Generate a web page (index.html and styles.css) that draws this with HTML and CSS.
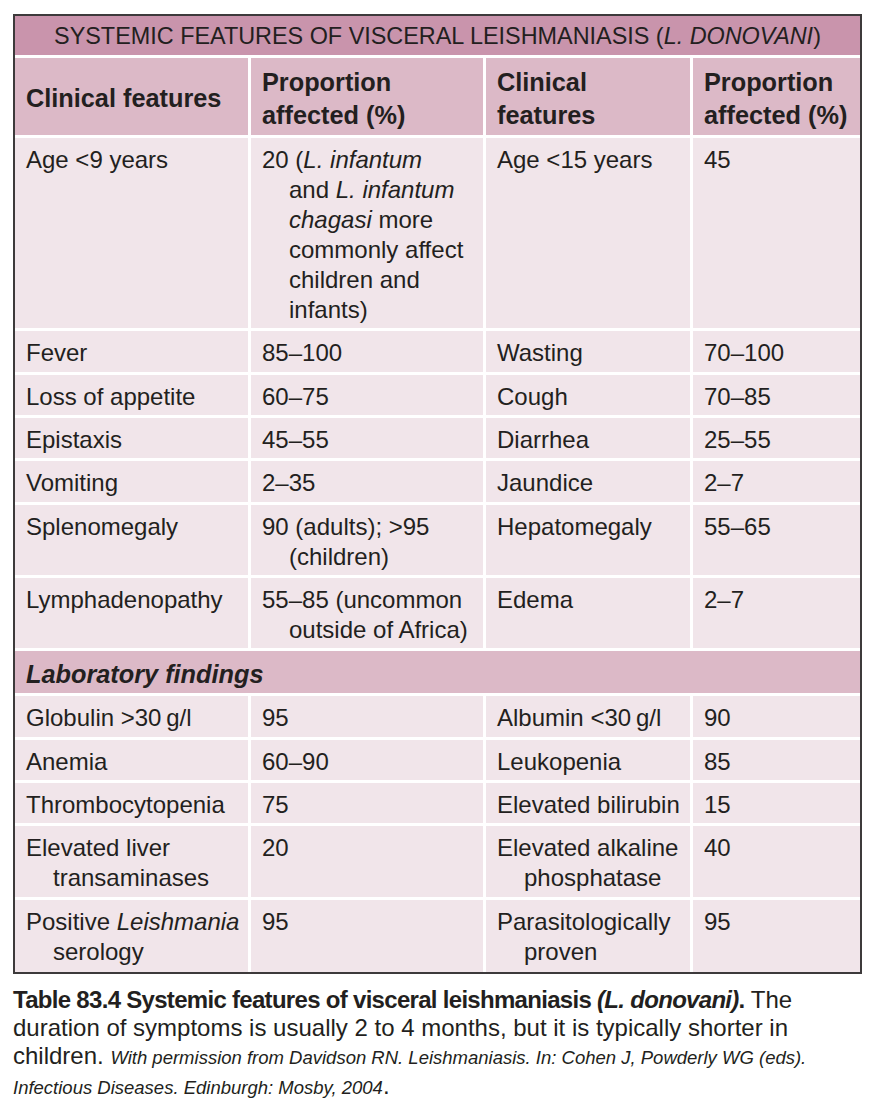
FILE: index.html
```html
<!DOCTYPE html>
<html lang="en">
<head>
<meta charset="utf-8">
<title>Systemic features of visceral leishmaniasis</title>
<link rel="stylesheet" href="styles.css">
</head>
<body>
<div class="page">
  <div class="table">
    <div class="title">SYSTEMIC FEATURES OF VISCERAL LEISHMANIASIS (<i>L. DONOVANI</i>)</div>

    <div class="th">Clinical features</div>
    <div class="th">Proportion<br>affected (%)</div>
    <div class="th">Clinical<br>features</div>
    <div class="th">Proportion<br>affected (%)</div>

    <div class="td">Age &lt;9 years</div>
    <div class="td">20 (<i>L. infantum</i><br>and <i>L. infantum</i><br><i>chagasi</i> more<br>commonly affect<br>children and<br>infants)</div>
    <div class="td">Age &lt;15 years</div>
    <div class="td">45</div>

    <div class="td">Fever</div>
    <div class="td">85–100</div>
    <div class="td">Wasting</div>
    <div class="td">70–100</div>

    <div class="td">Loss of appetite</div>
    <div class="td">60–75</div>
    <div class="td">Cough</div>
    <div class="td">70–85</div>

    <div class="td">Epistaxis</div>
    <div class="td">45–55</div>
    <div class="td">Diarrhea</div>
    <div class="td">25–55</div>

    <div class="td">Vomiting</div>
    <div class="td">2–35</div>
    <div class="td">Jaundice</div>
    <div class="td">2–7</div>

    <div class="td">Splenomegaly</div>
    <div class="td">90 (adults); &gt;95<br>(children)</div>
    <div class="td">Hepatomegaly</div>
    <div class="td">55–65</div>

    <div class="td">Lymphadenopathy</div>
    <div class="td">55–85 (uncommon<br>outside of Africa)</div>
    <div class="td">Edema</div>
    <div class="td">2–7</div>

    <div class="section">Laboratory findings</div>

    <div class="td">Globulin &gt;30&#8201;g/l</div>
    <div class="td">95</div>
    <div class="td">Albumin &lt;30&#8201;g/l</div>
    <div class="td">90</div>

    <div class="td">Anemia</div>
    <div class="td">60–90</div>
    <div class="td">Leukopenia</div>
    <div class="td">85</div>

    <div class="td">Thrombocytopenia</div>
    <div class="td">75</div>
    <div class="td">Elevated bilirubin</div>
    <div class="td">15</div>

    <div class="td">Elevated liver<br>transaminases</div>
    <div class="td">20</div>
    <div class="td">Elevated alkaline<br>phosphatase</div>
    <div class="td">40</div>

    <div class="td last">Positive <i>Leishmania</i><br>serology</div>
    <div class="td last">95</div>
    <div class="td last">Parasitologically<br>proven</div>
    <div class="td last">95</div>
  </div>

  <p class="caption"><span class="cap-bold">Table 83.4 Systemic features of visceral leishmaniasis <i>(L. donovani)</i>.</span> The<br>duration of symptoms is usually 2 to 4 months, but it is typically shorter in<br>children. <span class="credit">With permission from Davidson RN. Leishmaniasis. In: Cohen J, Powderly WG (eds).</span><br><span class="credit">Infectious Diseases. Edinburgh: Mosby, 2004</span>.</p>
</div>
</body>
</html>
```

FILE: styles.css
```css
html, body {
  margin: 0;
  padding: 0;
  background: #ffffff;
}

body {
  font-family: "Liberation Sans", Arial, Helvetica, sans-serif;
  color: #231f20;
}

.page {
  padding: 14px 0 0 13px;
}

.table {
  width: 845px;
  border: 2px solid #3d3a3b;
  background: #ffffff;
  display: grid;
  grid-template-columns: 233px 232px 204px 167px;
  column-gap: 3px;
  row-gap: 3px;
}

.title {
  grid-column: 1 / -1;
  background: #c994ac;
  font-size: 23.4px;
  line-height: 30px;
  padding: 5px 0 4px;
  text-align: center;
}

.th {
  background: #dcb9c7;
  font-weight: bold;
  font-size: 25.3px;
  line-height: 32.5px;
  padding: 8px 4px 4px 11px;
  height: 77px;
  box-sizing: border-box;
  display: flex;
  align-items: center;
}

.td {
  background: #f1e5ea;
  font-size: 24px;
  line-height: 30px;
  padding: 7px 4px 3.33px 38px;
  text-indent: -27px;
  white-space: nowrap;
}

.td.last {
  padding-bottom: 5px;
}

.section {
  grid-column: 1 / -1;
  background: #dcb9c7;
  font-weight: bold;
  font-style: italic;
  font-size: 25.3px;
  line-height: 30px;
  padding: 8px 0 4px 11px;
}

.caption {
  margin: 12px 0 0;
  font-size: 24px;
  line-height: 28px;
  white-space: nowrap;
  color: #231f20;
}

.cap-bold {
  font-weight: bold;
  letter-spacing: -0.7px;
}

.credit {
  font-style: italic;
  font-size: 18.5px;
}
```
